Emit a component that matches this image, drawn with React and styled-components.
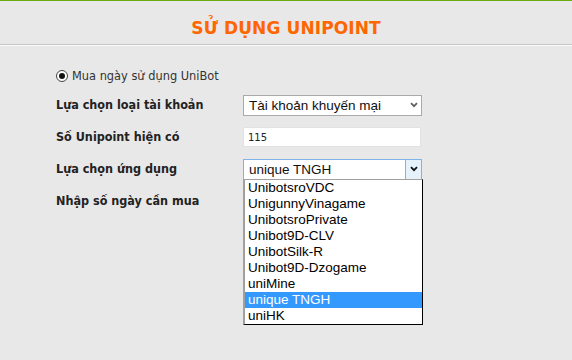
import React from 'react'
import styled, { createGlobalStyle } from 'styled-components'

const GlobalStyle = createGlobalStyle`
  body {
    margin: 0;
    background: #e8e8e8;
    font-family: "DejaVu Sans", Tahoma, sans-serif;
  }
`

const Page = styled.div`
  width: 572px;
  height: 360px;
  border-top: 1px solid #6aab12;
  box-sizing: border-box;
  position: relative;
`

const Header = styled.div`
  height: 44px;
  box-sizing: border-box;
  padding-top: 10px;
  display: flex;
  align-items: center;
  justify-content: center;
  border-bottom: 1px solid #c6c6c6;
  box-shadow: 0 1px 0 #fafafa;
`

const Title = styled.h1`
  margin: 0;
  font-size: 17px;
  font-weight: bold;
  color: #ff6600;
  letter-spacing: 0.1px;
`

const Form = styled.div`
  padding: 24px 0 0 56px;
  display: flex;
  flex-direction: column;
`

const RadioRow = styled.label`
  display: flex;
  align-items: center;
  gap: 4px;
  height: 14px;
  font-size: 11.4px;
  color: #333;
  margin-bottom: 6px;
`

const Radio = styled.span`
  width: 10px;
  height: 10px;
  border: 1px solid #444;
  border-radius: 50%;
  display: flex;
  align-items: center;
  justify-content: center;
  background: #fff;
  &::after {
    content: '';
    width: 6px;
    height: 6px;
    border-radius: 50%;
    background: #111;
  }
`

const Row = styled.div`
  display: flex;
  align-items: center;
  height: 32px;
`

const Label = styled.div`
  width: 187px;
  margin-top: -2px;
  font-family: "DejaVu Sans Condensed", "DejaVu Sans", sans-serif;
  font-size: 12.5px;
  font-weight: bold;
  color: #222;
`

const Field = styled.div`
  position: relative;
`

const SelectBox = styled.div`
  width: 179px;
  height: 21px;
  box-sizing: border-box;
  border: 1px solid ${p => (p.$focus ? '#7eb4ea' : '#a9a9a9')};
  background: #fff;
  display: flex;
  align-items: center;
  font-family: "Liberation Sans", Arial, sans-serif;
  font-size: 13.5px;
  color: #111;
`

const SelectText = styled.span`
  flex: 1;
  padding-left: 5px;
`

const Arrow = styled.span`
  width: 15px;
  align-self: stretch;
  display: flex;
  align-items: center;
  justify-content: center;
  background: ${p => (p.$focus ? '#e5f1fb' : 'transparent')};
  border-left: 1px solid ${p => (p.$focus ? '#7eb4ea' : 'transparent')};
`

const TextInput = styled.div`
  width: 178px;
  height: 20px;
  box-sizing: border-box;
  border: 1px solid #e2e2e2;
  background: #fff;
  display: flex;
  align-items: center;
  padding-left: 4px;
  font-size: 10px;
  color: #222;
`

const List = styled.ul`
  position: absolute;
  left: 0;
  top: 20px;
  width: 180px;
  margin: 0;
  padding: 0;
  list-style: none;
  box-sizing: border-box;
  background: #fff;
  border: 1px solid #000;
  border-left: 2px solid #a0a0a0;
  border-top-color: #a0a0a0;
  font-family: "Liberation Sans", Arial, sans-serif;
  font-size: 13.5px;
  z-index: 2;
`

const Option = styled.li`
  height: 16px;
  line-height: 16px;
  padding-left: 3px;
  color: ${p => (p.$active ? '#fff' : '#000')};
  background: ${p => (p.$active ? '#3399ff' : '#fff')};
`

const Chevron = ({ color }) => (
  <svg width="8" height="6" viewBox="0 0 8 6">
    <path d="M1 1.2 L4 4.2 L7 1.2" fill="none" stroke={color} strokeWidth="1.8" />
  </svg>
)

const apps = [
  'UnibotsroVDC',
  'UnigunnyVinagame',
  'UnibotsroPrivate',
  'Unibot9D-CLV',
  'UnibotSilk-R',
  'Unibot9D-Dzogame',
  'uniMine',
  'unique TNGH',
  'uniHK',
]

export default function App() {
  return (
    <Page>
      <GlobalStyle />
      <Header>
        <Title>SỬ DỤNG UNIPOINT</Title>
      </Header>
      <Form>
        <RadioRow>
          <Radio />
          Mua ngày sử dụng UniBot
        </RadioRow>
        <Row>
          <Label>Lựa chọn loại tài khoản</Label>
          <SelectBox>
            <SelectText>Tài khoản khuyến mại</SelectText>
            <Arrow>
              <Chevron color="#606060" />
            </Arrow>
          </SelectBox>
        </Row>
        <Row>
          <Label>Số Unipoint hiện có</Label>
          <TextInput>115</TextInput>
        </Row>
        <Row>
          <Label>Lựa chọn ứng dụng</Label>
          <Field>
            <SelectBox $focus>
              <SelectText>unique TNGH</SelectText>
              <Arrow $focus>
                <Chevron color="#111" />
              </Arrow>
            </SelectBox>
            <List>
              {apps.map(a => (
                <Option key={a} $active={a === 'unique TNGH'}>
                  {a}
                </Option>
              ))}
            </List>
          </Field>
        </Row>
        <Row>
          <Label>Nhập số ngày cần mua</Label>
        </Row>
      </Form>
    </Page>
  )
}
